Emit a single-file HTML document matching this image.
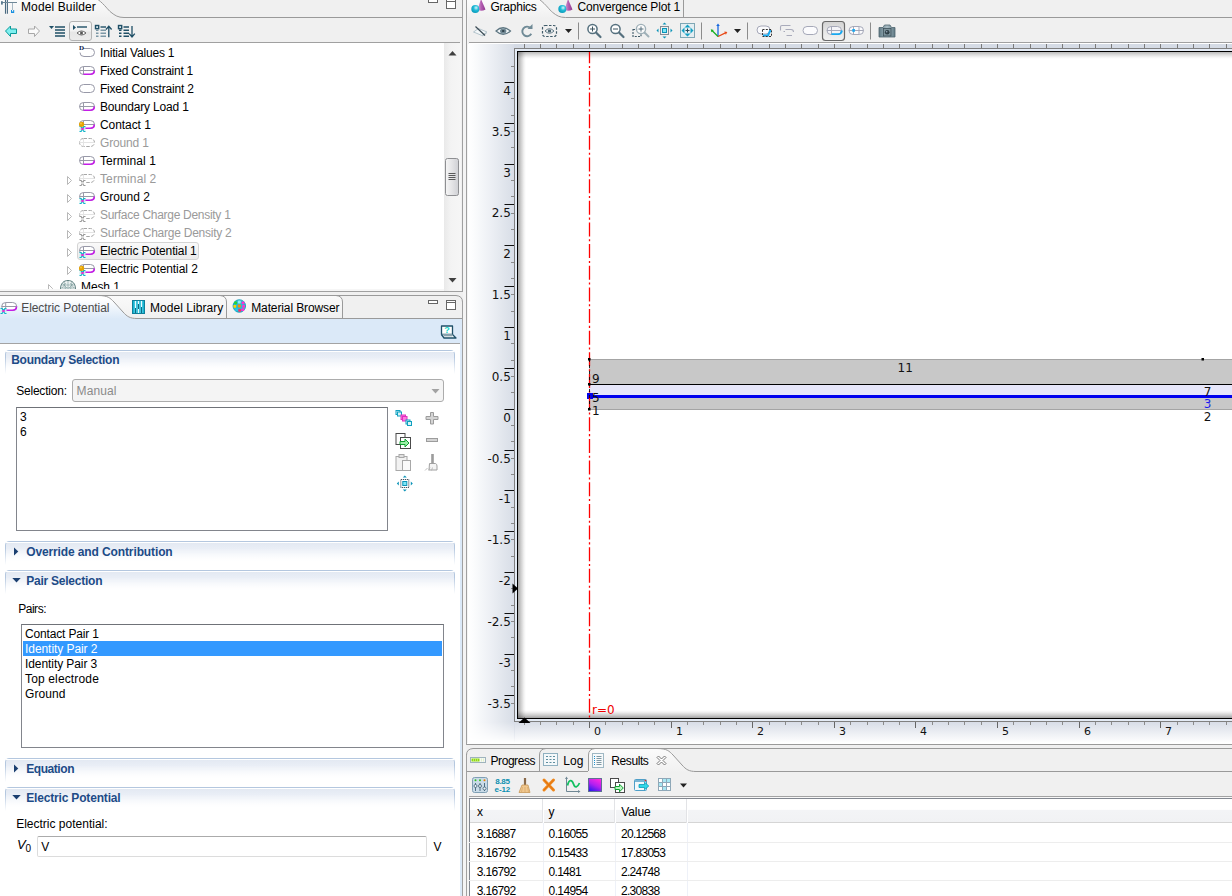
<!DOCTYPE html>
<html lang="en"><head><meta charset="utf-8"><title>Model Builder</title>
<style>
html,body{margin:0;padding:0;background:#f0f0f0;}
#root{position:relative;width:1232px;height:896px;overflow:hidden;background:#f0f0f0;font-family:"Liberation Sans",sans-serif;font-size:12px;color:#000;}
#root div,#root svg{position:absolute;box-sizing:border-box;}
#root svg{overflow:visible;}
.t{position:absolute;white-space:pre;line-height:1;height:1em;display:block;}

</style></head>
<body>
<div id="root">
<svg style="left:0px;top:0px;" width="463" height="18" viewBox="0 0 463 18" ><defs><linearGradient id="tg" x1="0" y1="0" x2="0" y2="1"><stop offset="0" stop-color="#fbfbfb"/><stop offset="1" stop-color="#f1f1f1"/></linearGradient></defs><path d="M0,0 L98,0 C105,5 108,10 111,12.3 C115,15.5 118,17.5 124,17.5 L0,17.5 Z" fill="url(#tg)"/><path d="M98,-0.5 C105,5 108,10 111,12.3 C115,15.5 118,17.5 124,17.5 L462,17.5" fill="none" stroke="#9a9a9a" stroke-width="1"/></svg>
<svg style="left:0px;top:0px;" width="18" height="15" viewBox="0 0 18 15" ><path d="M5.500,0 V13.700 M7.400,0 V13.700" stroke="#4a6a80" stroke-width="1.100"/><path d="M1,2.500 H17" stroke="#6f8898" stroke-width="1"/><rect x="1" y="1.200" width="1.800" height="3.400" fill="#5a7a90"/><path d="M12.500,3 V10" stroke="#a8b8c4" stroke-width="1"/><path d="M11,10 h1 v1.500 h1.200 v-1.500 h1 v3 h-3.200 z" fill="#1890e0"/></svg>
<svg style="left:428px;top:-1px;" width="30" height="12" viewBox="0 0 30 12" ><rect x="0.5" y="0.5" width="9" height="3" fill="#fff" stroke="#666"/><rect x="18.5" y="0.5" width="9" height="9" fill="#fff" stroke="#666"/><line x1="18" y1="2.5" x2="28" y2="2.5" stroke="#666"/></svg>
<div style="left:0px;top:42px;width:460px;height:1px;background:#a0a0a0;"></div>
<div style="left:0px;top:43px;width:444px;height:246px;background:#fff;"></div>
<div style="left:0px;top:289px;width:461px;height:2px;background:#f6f6f6;"></div>
<div style="left:444px;top:43px;width:17px;height:248px;background:linear-gradient(90deg,#e9e9e9 0,#f3f3f3 40%,#f6f6f6 100%);"></div>
<svg style="left:444px;top:43px;" width="17" height="248" viewBox="0 0 17 248" ><path d="M4.5,12.5 L8.5,8 L12.5,12.5 Z" fill="#404040"/><path d="M4.5,235 L12.5,235 L8.5,239.5 Z" fill="#404040"/><defs><linearGradient id="th" x1="0" y1="0" x2="1" y2="0"><stop offset="0" stop-color="#f6f6f6"/><stop offset="0.5" stop-color="#e4e4e6"/><stop offset="1" stop-color="#cfd0d4"/></linearGradient></defs><rect x="1.5" y="115.5" width="13" height="37" rx="2" fill="url(#th)" stroke="#8e8f92"/><path d="M4.5,130.5 h7 M4.5,132.5 h7 M4.5,134.5 h7 M4.5,136.5 h7" stroke="#5a5a5a" stroke-width="1"/></svg>
<div style="left:0px;top:291px;width:463px;height:1px;background:#a0a0a0;"></div>
<div style="left:462px;top:0px;width:1px;height:292px;background:#a0a0a0;"></div>
<div style="left:462px;top:302px;width:1px;height:594px;background:#a0a0a0;"></div>
<div style="left:466px;top:0px;width:1px;height:745px;background:#a0a0a0;"></div>
<div style="left:466px;top:754px;width:1px;height:142px;background:#a0a0a0;"></div>
<div style="left:463px;top:0px;width:3px;height:896px;background:#f4f4f4;"></div>
<svg style="left:0px;top:18px;" width="140" height="24" viewBox="0 0 140 24" ><path d="M5.5,13 L10.5,8 L10.5,11 L16.5,11 L16.5,15.5 L10.5,15.5 L10.5,18.5 Z" fill="#7ff0f0" stroke="#0a9a9a" stroke-width="1" stroke-linejoin="round"/><path d="M39.5,13 L34.5,8 L34.5,11 L28.5,11 L28.5,15.5 L34.5,15.5 L34.5,18.5 Z" fill="#fafafa" stroke="#a8a8a8" stroke-width="1" stroke-linejoin="round"/><path d="M49,8 L54,8 L51.5,11 Z" fill="#1f4f66"/><path d="M55,9 h10 M55,12 h10 M55,15 h10 M55,18 h10" stroke="#1f4f66" stroke-width="1.3"/><defs><linearGradient id="pb" x1="0" y1="0" x2="0" y2="1"><stop offset="0" stop-color="#f7f7f7"/><stop offset="0.5" stop-color="#f2f2f2"/><stop offset="0.55" stop-color="#e6e6e6"/><stop offset="1" stop-color="#ececec"/></linearGradient></defs><rect x="69.5" y="3.5" width="22" height="19" rx="2.5" fill="url(#pb)" stroke="#b4b4b4"/><path d="M73,7 L73,12 L76,9.5 Z" fill="#1f4f66"/><path d="M77,9 h10" stroke="#1f4f66" stroke-width="1.4"/><path d="M77,15 Q81.5,11 86,15 Q81.5,19 77,15 Z" fill="#fff" stroke="#555" stroke-width="0.9"/><circle cx="81.5" cy="15" r="1.5" fill="#555"/><rect x="95.500" y="7.500" width="3.200" height="3.200" fill="#d6e4ea" stroke="#1f4f66" stroke-width="1.400"/><path d="M100.500,9 h5.500" stroke="#1f4f66" stroke-width="1.400"/><path d="M96,12.300 h2.500 M96,15.300 h2.500 M96,18.300 h2.500 M100.500,12.300 h5.500 M100.500,15.300 h5.500 M100.500,18.300 h5.500" stroke="#7d98a6" stroke-width="1.400"/><path d="M108.800,19.300 V8.500 M106,11.500 L108.800,8.200 L111.600,11.500" stroke="#1f4f66" stroke-width="1.300" fill="none"/><rect x="118.500" y="7.500" width="3.200" height="3.200" fill="#d6e4ea" stroke="#1f4f66" stroke-width="1.400"/><path d="M123.500,9 h5.500 M119,12.300 h2.500 M119,15.300 h2.500 M119,18.300 h2.500 M123.500,12.300 h5.500 M123.500,15.300 h5.500 M123.500,18.300 h5.500" stroke="#1f4f66" stroke-width="1.400"/><path d="M132,8 V18.800 M129.200,15.700 L132,19 L134.800,15.700" stroke="#1f4f66" stroke-width="1.300" fill="none"/></svg>
<div style="left:77px;top:242px;width:122px;height:18px;border:1px solid #d4d4d4;border-radius:3px;background:linear-gradient(#fafafa,#ebebeb);"></div>
<svg style="left:79px;top:43px;" width="16" height="18" viewBox="0 0 16 18" ><path d="M4,5.500 H11.5 a4,4 0 0 1 0,8 H5 a4,4 0 0 1 -4,-4" fill="none" stroke="#9899a8"/></svg>
<svg style="left:79px;top:61px;" width="16" height="18" viewBox="0 0 16 18" ><rect x="0.5" y="5.5" width="15" height="8" rx="4" ry="4" fill="#fff" stroke="#9899a8"/><path d="M4.5,5.5 v8 M0.5,9.5 h15" stroke="#9899a8" stroke-width="1" fill="none"/><path d="M4.5,13.3 H11 C13.5,13.3 15.3,12 15.3,9.5" stroke="#c51ce8" stroke-width="1.6" fill="none"/></svg>
<svg style="left:79px;top:79px;" width="16" height="18" viewBox="0 0 16 18" ><rect x="0.5" y="5.5" width="15" height="8" rx="4" ry="4" fill="#fff" stroke="#9899a8"/></svg>
<svg style="left:79px;top:97px;" width="16" height="18" viewBox="0 0 16 18" ><rect x="0.5" y="5.5" width="15" height="8" rx="4" ry="4" fill="#fff" stroke="#9899a8"/><path d="M4.5,5.5 v8 M0.5,9.5 h15" stroke="#9899a8" stroke-width="1" fill="none"/><path d="M4.5,13.3 H11 C13.5,13.3 15.3,12 15.3,9.5" stroke="#c51ce8" stroke-width="1.6" fill="none"/></svg>
<svg style="left:79px;top:115px;" width="16" height="18" viewBox="0 0 16 18" ><rect x="0.5" y="5.5" width="15" height="8" rx="4" ry="4" fill="#fff" stroke="#9899a8"/><path d="M4.5,5.5 v8 M0.5,9.5 h15" stroke="#9899a8" stroke-width="1" fill="none"/><path d="M4.5,13.3 H11 C13.5,13.3 15.3,12 15.3,9.5" stroke="#c51ce8" stroke-width="1.6" fill="none"/><path d="M0.5,11.5 H2 Q4.300,14 2,16.5 H0.5 M6.5,11.5 H5 Q2.700,14 5,16.5 H6.5" fill="none" stroke="#12b5c9" stroke-width="1.200"/><path d="M0.5,12.2 H1.800 Q3.300,14 1.800,15.8 H0.5 Z M6.5,12.2 H5.200 Q3.700,14 5.200,15.8 H6.5 Z" fill="#c8eef2"/><rect x="2.300" y="13.1" width="2.400" height="1.800" fill="#ff1fd0"/><circle cx="2.6" cy="9.300" r="2.6" fill="#e8a400"/><circle cx="2" cy="8.600" r="1" fill="#f6c540"/></svg>
<svg style="left:79px;top:133px;" width="16" height="18" viewBox="0 0 16 18" ><rect x="0.5" y="5.5" width="15" height="8" rx="4" ry="4" fill="#fff" stroke="#a6a6a6" stroke-dasharray="3.5,1.5"/><path d="M4.5,5.5 v8 M0.5,9.5 h15" stroke="#e4e4e4" stroke-width="1" fill="none"/></svg>
<svg style="left:79px;top:151px;" width="16" height="18" viewBox="0 0 16 18" ><rect x="0.5" y="5.5" width="15" height="8" rx="4" ry="4" fill="#fff" stroke="#9899a8"/><path d="M4.5,5.5 v8 M0.5,9.5 h15" stroke="#9899a8" stroke-width="1" fill="none"/><path d="M4.5,13.3 H11 C13.5,13.3 15.3,12 15.3,9.5" stroke="#c51ce8" stroke-width="1.6" fill="none"/></svg>
<svg style="left:79px;top:169px;" width="16" height="18" viewBox="0 0 16 18" ><rect x="0.5" y="5.5" width="15" height="8" rx="4" ry="4" fill="#fff" stroke="#a6a6a6" stroke-dasharray="3.5,1.5"/><path d="M4.5,5.5 v8 M0.5,9.5 h15" stroke="#e4e4e4" stroke-width="1" fill="none"/><path d="M0.5,11.5 H2 Q4.300,14 2,16.5 H0.5 M6.5,11.5 H5 Q2.700,14 5,16.5 H6.5" fill="none" stroke="#999999" stroke-width="1.200"/><path d="M0.5,12.2 H1.800 Q3.300,14 1.800,15.8 H0.5 Z M6.5,12.2 H5.200 Q3.700,14 5.200,15.8 H6.5 Z" fill="#fff"/><rect x="2.300" y="13.1" width="2.400" height="1.800" fill="#e0e0e0"/></svg>
<svg style="left:67px;top:176px;" width="6" height="9" viewBox="0 0 6 9" ><path d="M0.5,0.5 L4.5,4.5 L0.5,8.5 Z" fill="#fff" stroke="#b8b8b8" stroke-width="1" stroke-linejoin="round"/></svg>
<svg style="left:79px;top:187px;" width="16" height="18" viewBox="0 0 16 18" ><rect x="0.5" y="5.5" width="15" height="8" rx="4" ry="4" fill="#fff" stroke="#9899a8"/><path d="M4.5,5.5 v8 M0.5,9.5 h15" stroke="#9899a8" stroke-width="1" fill="none"/><path d="M4.5,13.3 H11 C13.5,13.3 15.3,12 15.3,9.5" stroke="#c51ce8" stroke-width="1.6" fill="none"/><path d="M0.5,11.5 H2 Q4.300,14 2,16.5 H0.5 M6.5,11.5 H5 Q2.700,14 5,16.5 H6.5" fill="none" stroke="#12b5c9" stroke-width="1.200"/><path d="M0.5,12.2 H1.800 Q3.300,14 1.800,15.8 H0.5 Z M6.5,12.2 H5.200 Q3.700,14 5.200,15.8 H6.5 Z" fill="#c8eef2"/><rect x="2.300" y="13.1" width="2.400" height="1.800" fill="#ff1fd0"/></svg>
<svg style="left:67px;top:194px;" width="6" height="9" viewBox="0 0 6 9" ><path d="M0.5,0.5 L4.5,4.5 L0.5,8.5 Z" fill="#fff" stroke="#b8b8b8" stroke-width="1" stroke-linejoin="round"/></svg>
<svg style="left:79px;top:205px;" width="16" height="18" viewBox="0 0 16 18" ><rect x="0.5" y="5.5" width="15" height="8" rx="4" ry="4" fill="#fff" stroke="#a6a6a6" stroke-dasharray="3.5,1.5"/><path d="M4.5,5.5 v8 M0.5,9.5 h15" stroke="#e4e4e4" stroke-width="1" fill="none"/><path d="M0.5,11.5 H2 Q4.300,14 2,16.5 H0.5 M6.5,11.5 H5 Q2.700,14 5,16.5 H6.5" fill="none" stroke="#999999" stroke-width="1.200"/><path d="M0.5,12.2 H1.800 Q3.300,14 1.800,15.8 H0.5 Z M6.5,12.2 H5.200 Q3.700,14 5.200,15.8 H6.5 Z" fill="#fff"/><rect x="2.300" y="13.1" width="2.400" height="1.800" fill="#e0e0e0"/></svg>
<svg style="left:67px;top:212px;" width="6" height="9" viewBox="0 0 6 9" ><path d="M0.5,0.5 L4.5,4.5 L0.5,8.5 Z" fill="#fff" stroke="#b8b8b8" stroke-width="1" stroke-linejoin="round"/></svg>
<svg style="left:79px;top:223px;" width="16" height="18" viewBox="0 0 16 18" ><rect x="0.5" y="5.5" width="15" height="8" rx="4" ry="4" fill="#fff" stroke="#a6a6a6" stroke-dasharray="3.5,1.5"/><path d="M4.5,5.5 v8 M0.5,9.5 h15" stroke="#e4e4e4" stroke-width="1" fill="none"/><path d="M0.5,11.5 H2 Q4.300,14 2,16.5 H0.5 M6.5,11.5 H5 Q2.700,14 5,16.5 H6.5" fill="none" stroke="#999999" stroke-width="1.200"/><path d="M0.5,12.2 H1.800 Q3.300,14 1.800,15.8 H0.5 Z M6.5,12.2 H5.200 Q3.700,14 5.200,15.8 H6.5 Z" fill="#fff"/><rect x="2.300" y="13.1" width="2.400" height="1.800" fill="#e0e0e0"/></svg>
<svg style="left:67px;top:230px;" width="6" height="9" viewBox="0 0 6 9" ><path d="M0.5,0.5 L4.5,4.5 L0.5,8.5 Z" fill="#fff" stroke="#b8b8b8" stroke-width="1" stroke-linejoin="round"/></svg>
<svg style="left:79px;top:241px;" width="16" height="18" viewBox="0 0 16 18" ><rect x="0.5" y="5.5" width="15" height="8" rx="4" ry="4" fill="#fff" stroke="#9899a8"/><path d="M4.5,5.5 v8 M0.5,9.5 h15" stroke="#9899a8" stroke-width="1" fill="none"/><path d="M4.5,13.3 H11 C13.5,13.3 15.3,12 15.3,9.5" stroke="#c51ce8" stroke-width="1.6" fill="none"/><path d="M0.5,11.5 H2 Q4.300,14 2,16.5 H0.5 M6.5,11.5 H5 Q2.700,14 5,16.5 H6.5" fill="none" stroke="#12b5c9" stroke-width="1.200"/><path d="M0.5,12.2 H1.800 Q3.300,14 1.800,15.8 H0.5 Z M6.5,12.2 H5.200 Q3.700,14 5.200,15.8 H6.5 Z" fill="#c8eef2"/><rect x="2.300" y="13.1" width="2.400" height="1.800" fill="#ff1fd0"/></svg>
<svg style="left:67px;top:248px;" width="6" height="9" viewBox="0 0 6 9" ><path d="M0.5,0.5 L4.5,4.5 L0.5,8.5 Z" fill="#fff" stroke="#b8b8b8" stroke-width="1" stroke-linejoin="round"/></svg>
<svg style="left:79px;top:259px;" width="16" height="18" viewBox="0 0 16 18" ><rect x="0.5" y="5.5" width="15" height="8" rx="4" ry="4" fill="#fff" stroke="#9899a8"/><path d="M4.5,5.5 v8 M0.5,9.5 h15" stroke="#9899a8" stroke-width="1" fill="none"/><path d="M4.5,13.3 H11 C13.5,13.3 15.3,12 15.3,9.5" stroke="#c51ce8" stroke-width="1.6" fill="none"/><path d="M0.5,11.5 H2 Q4.300,14 2,16.5 H0.5 M6.5,11.5 H5 Q2.700,14 5,16.5 H6.5" fill="none" stroke="#12b5c9" stroke-width="1.200"/><path d="M0.5,12.2 H1.800 Q3.300,14 1.800,15.8 H0.5 Z M6.5,12.2 H5.200 Q3.700,14 5.200,15.8 H6.5 Z" fill="#c8eef2"/><rect x="2.300" y="13.1" width="2.400" height="1.800" fill="#ff1fd0"/><circle cx="2.6" cy="9.300" r="2.6" fill="#e8a400"/><circle cx="2" cy="8.600" r="1" fill="#f6c540"/></svg>
<svg style="left:67px;top:266px;" width="6" height="9" viewBox="0 0 6 9" ><path d="M0.5,0.5 L4.5,4.5 L0.5,8.5 Z" fill="#fff" stroke="#b8b8b8" stroke-width="1" stroke-linejoin="round"/></svg>
<div style="left:0px;top:277px;width:444px;height:12px;overflow:hidden;"><svg style="left:48px;top:7px;" width="6" height="9" viewBox="0 0 6 9" ><path d="M0.5,0.5 L4.5,4.5 L0.5,8.5 Z" fill="#fff" stroke="#b8b8b8" stroke-width="1"/></svg><svg style="left:60px;top:3px;" width="16" height="14" viewBox="0 0 16 14" ><path d="M0.500,9 C0.500,3 4,0.500 8,0.500 C12,0.500 15.500,3 15.500,9 V12 H0.500 Z" fill="#eef3f3" stroke="#5f7f80"/><path d="M1,5 H15 M1,8 H15 M4,1.500 L6,12 M12,1.500 L10,12 M8,1 V12 M2,3 L7,8 M14,3 L9,8 M2,8 L6,3 M14,8 L10,3" stroke="#7a9a9a" stroke-width="0.600" fill="none"/></svg><span class="t" style="left:81px;top:3.84px;font-size:12px;letter-spacing:-0.1px;">Mesh 1</span></div>
<svg style="left:0px;top:292px;" width="463" height="28" viewBox="0 0 463 28" ><defs><linearGradient id="tg2" x1="0" y1="0" x2="0" y2="1"><stop offset="0" stop-color="#ffffff"/><stop offset="0.150" stop-color="#ffffff"/><stop offset="1" stop-color="#dbe9f8"/></linearGradient><linearGradient id="tg3" x1="0" y1="0" x2="0" y2="1"><stop offset="0" stop-color="#fafafa"/><stop offset="1" stop-color="#f0f0f0"/></linearGradient></defs><path d="M100,3.5 L336,3.500 Q342.5,4 342.5,10 L342.500,26.5 L100,26.5 Z" fill="url(#tg3)"/><path d="M0,3.500 L98,3.500 C108,3.5 110,6 114,10 L123,20 C127,24.500 130,26.5 137,26.5 L137,27 L0,27 Z" fill="url(#tg2)"/><path d="M0,3.500 L98,3.500 C108,3.5 110,6 114,10 L123,20 C127,24.500 130,26.5 137,26.5 L462,26.5" fill="none" stroke="#9a9a9a"/><path d="M98,3.500 L456,3.500 Q462.500,4 462.500,10" fill="none" stroke="#9a9a9a"/><path d="M220,3.500 Q226.500,4 226.500,10 V26" fill="none" stroke="#9a9a9a"/><path d="M336,3.500 Q342.500,4 342.500,10 V26" fill="none" stroke="#9a9a9a"/></svg>
<svg style="left:428px;top:300px;" width="30" height="12" viewBox="0 0 30 12" ><rect x="0.5" y="0.5" width="9" height="3" fill="#fff" stroke="#666"/><rect x="18.5" y="0.5" width="9" height="9" fill="#fff" stroke="#666"/><line x1="18" y1="2.5" x2="28" y2="2.5" stroke="#666"/></svg>
<svg style="left:0px;top:300px;" width="20" height="18" viewBox="0 0 20 18" ><g transform="translate(1.200,0)"><rect x="0.5" y="2.5" width="15" height="8" rx="4" ry="4" fill="#fff" stroke="#9899a8"/><path d="M4.5,2.5 v8 M0.5,6.5 h15" stroke="#9899a8" stroke-width="1" fill="none"/><path d="M4.5,10.3 H11 C13.5,10.3 15.3,9 15.3,6.5" stroke="#c51ce8" stroke-width="1.6" fill="none"/></g><path d="M0.5,8.5 H2 Q4.300,11 2,13.5 H0.5 M6.5,8.5 H5 Q2.700,11 5,13.5 H6.5" fill="none" stroke="#12b5c9" stroke-width="1.200"/><path d="M0.5,9.2 H1.800 Q3.300,11 1.800,12.8 H0.5 Z M6.5,9.2 H5.200 Q3.700,11 5.200,12.8 H6.5 Z" fill="#c8eef2"/><rect x="2.300" y="10.1" width="2.400" height="1.800" fill="#ff1fd0"/></svg>
<svg style="left:132px;top:300px;" width="13" height="14" viewBox="0 0 13 14" ><rect x="0.5" y="0.5" width="12" height="13" fill="#18b7d4" stroke="#0f7f9a"/><path d="M3.5,1 V13 M6.5,1 V13 M9.500,1 V13" stroke="#e8fbff" stroke-width="1.4"/><path d="M3.5,8 V13 M6.5,4 V9 M9.500,7 V13" stroke="#0c6b85" stroke-width="1"/></svg>
<svg style="left:232px;top:299px;" width="15" height="15" viewBox="0 0 15 15" ><circle cx="7.300" cy="7" r="6.300" fill="#2bb9d2"/><circle cx="7.300" cy="7" r="6.300" fill="none" stroke="#0f9ab8" stroke-width="0.800"/><rect x="2.2" y="2.4" width="2.800" height="2.800" rx="0.600" fill="#22d832"/><rect x="5.9" y="1.6" width="2.800" height="2.800" rx="0.600" fill="#8ff0f4"/><rect x="9.6" y="2.4" width="2.800" height="2.800" rx="0.600" fill="#ff30d0"/><rect x="1.4" y="5.9" width="2.800" height="2.800" rx="0.600" fill="#ffd400"/><rect x="5.9" y="5.6" width="2.800" height="2.800" rx="0.600" fill="#ff9000"/><rect x="10.2" y="5.9" width="2.800" height="2.800" rx="0.600" fill="#ff30d0"/><rect x="3.2" y="9.3" width="2.800" height="2.800" rx="0.600" fill="#22c8e8"/><rect x="6.3" y="9.9" width="2.800" height="2.800" rx="0.600" fill="#ff3060"/><rect x="9.4" y="9.3" width="2.800" height="2.800" rx="0.600" fill="#ff30d0"/></svg>
<div style="left:0px;top:319px;width:462px;height:25px;background:#dbe9f8;"></div>
<div style="left:460px;top:344px;width:2px;height:552px;background:#dbe9f8;"></div>
<div style="left:0px;top:344px;width:460px;height:552px;background:#fff;"></div>
<div style="left:0px;top:343px;width:460px;height:1px;background:#a3a3a3;"></div>
<svg style="left:440px;top:324px;" width="17" height="16" viewBox="0 0 17 16" ><path d="M1.5,2 H12.500 V10.500 H1.500 Z" fill="#fff" stroke="#1f5068" stroke-width="1.3" stroke-linejoin="round"/><path d="M1.5,10.500 L4,14 H16 L12.500,10.500" fill="#eef3f5" stroke="#1f5068" stroke-width="1.3" stroke-linejoin="round"/><path d="M3.5,11.500 H12" stroke="#8aa3ad" stroke-width="1.5"/></svg>
<div style="left:5px;top:350px;width:450px;height:24px;border:1px solid #b4c7df;border-bottom:none;border-radius:4px 4px 0 0;background:linear-gradient(#e2e8f2 0,#eef2f8 45%,#ffffff 85%);-webkit-mask-image:linear-gradient(#000 30%,transparent 100%);mask-image:linear-gradient(#000 30%,transparent 100%);"></div>
<div style="left:6px;top:351px;width:448px;height:1px;background:#fff;"></div>
<div style="left:5px;top:541px;width:450px;height:24px;border:1px solid #b4c7df;border-bottom:none;border-radius:4px 4px 0 0;background:linear-gradient(#e2e8f2 0,#eef2f8 45%,#ffffff 85%);-webkit-mask-image:linear-gradient(#000 30%,transparent 100%);mask-image:linear-gradient(#000 30%,transparent 100%);"></div>
<div style="left:6px;top:542px;width:448px;height:1px;background:#fff;"></div>
<svg style="left:14px;top:547px;" width="5" height="9" viewBox="0 0 5 9" ><path d="M0,0.5 L4.300,4.5 L0,8.5 Z" fill="#1b3f70"/></svg>
<div style="left:5px;top:570px;width:450px;height:24px;border:1px solid #b4c7df;border-bottom:none;border-radius:4px 4px 0 0;background:linear-gradient(#e2e8f2 0,#eef2f8 45%,#ffffff 85%);-webkit-mask-image:linear-gradient(#000 30%,transparent 100%);mask-image:linear-gradient(#000 30%,transparent 100%);"></div>
<div style="left:6px;top:571px;width:448px;height:1px;background:#fff;"></div>
<svg style="left:12px;top:578px;" width="9" height="5" viewBox="0 0 9 5" ><path d="M0.3,0 L8.700,0 L4.500,4.500 Z" fill="#1b3f70"/></svg>
<div style="left:5px;top:758px;width:450px;height:24px;border:1px solid #b4c7df;border-bottom:none;border-radius:4px 4px 0 0;background:linear-gradient(#e2e8f2 0,#eef2f8 45%,#ffffff 85%);-webkit-mask-image:linear-gradient(#000 30%,transparent 100%);mask-image:linear-gradient(#000 30%,transparent 100%);"></div>
<div style="left:6px;top:759px;width:448px;height:1px;background:#fff;"></div>
<svg style="left:14px;top:764px;" width="5" height="9" viewBox="0 0 5 9" ><path d="M0,0.5 L4.300,4.5 L0,8.5 Z" fill="#1b3f70"/></svg>
<div style="left:5px;top:787px;width:450px;height:24px;border:1px solid #b4c7df;border-bottom:none;border-radius:4px 4px 0 0;background:linear-gradient(#e2e8f2 0,#eef2f8 45%,#ffffff 85%);-webkit-mask-image:linear-gradient(#000 30%,transparent 100%);mask-image:linear-gradient(#000 30%,transparent 100%);"></div>
<div style="left:6px;top:788px;width:448px;height:1px;background:#fff;"></div>
<svg style="left:12px;top:795px;" width="9" height="5" viewBox="0 0 9 5" ><path d="M0.3,0 L8.700,0 L4.500,4.500 Z" fill="#1b3f70"/></svg>
<div style="left:72px;top:379px;width:372px;height:23px;border:1px solid #acacac;border-radius:3px;background:#f4f4f4;"></div>
<svg style="left:431px;top:389px;" width="9" height="5" viewBox="0 0 9 5" ><path d="M0.5,0 L8.500,0 L4.500,4.500 Z" fill="#a2a2a2"/></svg>
<div style="left:16px;top:407px;width:372px;height:124px;border:1px solid #82858c;border-top-color:#6f7278;background:#fff;"></div>
<svg style="left:395px;top:409px;" width="48" height="84" viewBox="0 0 48 84" ><g fill="none" stroke-width="1"><rect x="1" y="1.500" width="4" height="4" fill="#d9f4f8" stroke="#0fa0c0"/><rect x="2.5" y="3" width="4" height="4" fill="#d9f4f8" stroke="#0fa0c0"/><rect x="6" y="6" width="4.500" height="4.500" fill="#ff7ae0" stroke="#e030c0"/><rect x="7.500" y="7.500" width="4.500" height="4.500" fill="#ff7ae0" stroke="#e030c0"/><rect x="11" y="11" width="4" height="4" fill="#d9f4f8" stroke="#0fa0c0"/><rect x="12.500" y="12.500" width="4" height="4" fill="#d9f4f8" stroke="#0fa0c0"/></g><path d="M35.5,3.500 h3 v4 h4.500 v3 h-4.500 v4.500 h-3 v-4.500 h-4.500 v-3 h4.500 z" fill="#d4d4d4" stroke="#9c9c9c"/><rect x="1" y="24.500" width="9" height="11" fill="#fff" stroke="#4a4a4a"/><rect x="5.500" y="28.500" width="10" height="11" fill="#fff" stroke="#4a4a4a"/><path d="M5,32.500 h5 v-2.500 l4,4 l-4,4 v-2.500 h-5 z" fill="#9df0a8" stroke="#10a030" stroke-width="1"/><rect x="31.500" y="29.500" width="11" height="3" fill="#d4d4d4" stroke="#9c9c9c"/><rect x="1" y="47.500" width="11" height="14" fill="#f2f2f2" stroke="#a8a8a8"/><rect x="4" y="45.500" width="5" height="3" fill="#e0e0e0" stroke="#a8a8a8"/><rect x="7.500" y="51.500" width="8" height="10" fill="#fafafa" stroke="#a8a8a8"/><path d="M37.500,45 v10" stroke="#9c9c9c" stroke-width="2.600"/><path d="M34.500,54.500 h6 q1.500,0.500 1.500,2.500 v4 h-2 l-6,0 z" fill="#f4f4f4" stroke="#a0a0a0"/><path d="M30,61.500 l2.500,-2.500 M33.500,61.500 l1.500,-3 M36.500,61.500 l1,-3" stroke="#b0b0b0" stroke-width="0.800"/><g transform="translate(1.300,0)"><rect x="4.500" y="70.500" width="8" height="8" fill="none" stroke="#1a2a3a" stroke-dasharray="1,1"/><rect x="6.500" y="72.500" width="4" height="4" fill="#7fe6f5" stroke="#0b93b8"/><path d="M8.500,66.500 l2,2 h-4 z M8.500,82.500 l2,-2 h-4 z M0.500,74.500 l2,-2 v4 z M16.500,74.500 l-2,-2 v4 z" fill="#0b93b8"/></g></svg>
<div style="left:21px;top:624px;width:423px;height:124px;border:1px solid #82858c;border-top-color:#6f7278;background:#fff;"></div>
<div style="left:23px;top:641px;width:419px;height:15px;background:#3399ff;"></div>
<div style="left:37px;top:836px;width:390px;height:21px;border:1px solid #dcdcdc;border-top-color:#ababab;border-radius:2px;background:#fff;"></div>
<div style="left:467px;top:0px;width:765px;height:18px;background:#f0f0f0;"></div>
<svg style="left:467px;top:0px;" width="765" height="18" viewBox="0 0 765 18" ><path d="M0,0 L72.500,0 C79.500,5 82.500,10 85.500,12.3 C89.500,15.5 92.500,17.5 98.500,17.5 L0,17.5 Z" fill="url(#tg)"/><path d="M72.500,-0.500 C79.500,5 82.500,10 85.500,12.3 C89.500,15.5 92.500,17.5 98.500,17.5 L765,17.5" fill="none" stroke="#9a9a9a"/><path d="M216.500,0 V17" stroke="#9a9a9a"/></svg>
<svg style="left:471px;top:0px;" width="16" height="14" viewBox="0 0 16 14" ><defs><radialGradient id="sph" cx="0.6" cy="0.35" r="0.7"><stop offset="0" stop-color="#d8f6fb"/><stop offset="0.45" stop-color="#22bcd8"/><stop offset="1" stop-color="#0797b8"/></radialGradient><linearGradient id="cone" x1="0" y1="0" x2="1" y2="0"><stop offset="0" stop-color="#d9a6d9"/><stop offset="0.5" stop-color="#b25cb0"/><stop offset="1" stop-color="#8e3a8e"/></linearGradient></defs><path d="M10,-1 L14.500,9.500 Q10,12 6.500,9.500 Z" fill="url(#cone)"/><circle cx="4.300" cy="9" r="4" fill="url(#sph)"/></svg>
<svg style="left:558px;top:0px;" width="16" height="14" viewBox="0 0 16 14" ><defs><radialGradient id="sph" cx="0.6" cy="0.35" r="0.7"><stop offset="0" stop-color="#d8f6fb"/><stop offset="0.45" stop-color="#22bcd8"/><stop offset="1" stop-color="#0797b8"/></radialGradient><linearGradient id="cone" x1="0" y1="0" x2="1" y2="0"><stop offset="0" stop-color="#d9a6d9"/><stop offset="0.5" stop-color="#b25cb0"/><stop offset="1" stop-color="#8e3a8e"/></linearGradient></defs><path d="M10,-1 L14.500,9.500 Q10,12 6.500,9.500 Z" fill="url(#cone)"/><circle cx="4.300" cy="9" r="4" fill="url(#sph)"/></svg>
<div style="left:469px;top:42px;width:763px;height:1px;background:#a0a0a0;"></div>
<div style="left:469px;top:43px;width:763px;height:1px;background:#ffffff;"></div>
<svg style="left:467px;top:18px;" width="440" height="24" viewBox="0 0 440 24" ><path d="M6.500,14 L11.500,10.500 L20,14 L15,17.500 Z" fill="#f4f8fa" stroke="#b4c4cc" stroke-width="1"/><path d="M15,17.500 L20,14 L19.500,15.500 L15.500,18.500 Z" fill="#b4c4cc"/><path d="M8.500,8.500 L18,17.500" stroke="#3b4b54" stroke-width="1.200"/><path d="M29,13 Q36,6.500 43.500,13 Q36,19.500 29,13 Z" fill="#f4f8fa" stroke="#5e7682" stroke-width="1.2"/><ellipse cx="36.2" cy="13" rx="3.200" ry="2.600" fill="#6f8793"/><ellipse cx="36.200" cy="13" rx="1.300" ry="1.100" fill="#2c3e48"/><path d="M63.500,10 A4.800,4.800 0 1 0 64.300,15.800" fill="none" stroke="#6f8a96" stroke-width="1.900"/><path d="M60.500,11 L65.500,11 L65.500,6 Z" fill="#6f8a96"/><rect x="75.500" y="7.500" width="14" height="11" rx="2.500" fill="none" stroke="#3f5a68" stroke-width="1.200" stroke-dasharray="2.500,1.500"/><path d="M78,13 Q82.500,8.500 87,13 Q82.500,17.500 78,13 Z" fill="#f4f8fa" stroke="#5e7682" stroke-width="1"/><ellipse cx="82.500" cy="13" rx="1.800" ry="1.600" fill="#4f6773"/><path d="M98,11 L105,11 L101.500,15 Z" fill="#222"/><path d="M111.500,4.500 V21.500" stroke="#8c8c8c" stroke-width="1"/><circle cx="125.500" cy="11" r="4.600" fill="#fdfdfd" stroke="#55707e" stroke-width="1.500"/><path d="M123,11 h5 M125.500,8.500 v5" stroke="#3b525e" stroke-width="1"/><path d="M129,14.500 L133.500,19" stroke="#55707e" stroke-width="2.200" stroke-linecap="round"/><circle cx="148.500" cy="11" r="4.600" fill="#fdfdfd" stroke="#55707e" stroke-width="1.500"/><path d="M146,11 h5" stroke="#3b525e" stroke-width="1"/><path d="M152,14.500 L156.500,19" stroke="#55707e" stroke-width="2.200" stroke-linecap="round"/><rect x="166" y="11.500" width="8" height="7" fill="none" stroke="#3f5a68" stroke-width="1.100" stroke-dasharray="2,1.200"/><circle cx="174" cy="11" r="4.600" fill="rgba(253,253,253,0.85)" stroke="#9fb0b8" stroke-width="1.400"/><path d="M171.500,11 h5 M174,8.500 v5" stroke="#5b7380" stroke-width="1"/><path d="M177.500,14.500 L181.500,18.500" stroke="#9fb0b8" stroke-width="2" stroke-linecap="round"/><g transform="translate(0,1)"><rect x="193.500" y="7.500" width="8" height="8" fill="none" stroke="#1a2a3a" stroke-dasharray="1,1"/><rect x="195.500" y="9.500" width="4" height="4" fill="#7fe6f5" stroke="#0b93b8"/><path d="M197.500,3.500 l2,2 h-4 z M197.500,19.500 l2,-2 h-4 z M189.500,11.500 l2,-2 v4 z M205.500,11.500 l-2,-2 v4 z" fill="#0b93b8"/></g><rect x="213.500" y="5.500" width="14" height="14" fill="#e3eef2" stroke="#7fa7b5"/><path d="M220.500,6.500 l3,3 h-6 z M220.500,18.500 l3,-3 h-6 z M214.500,12.500 l3,-3 v6 z M226.500,12.500 l-3,-3 v6 z" fill="#12a0c4"/><path d="M218.500,12.500 h4 M220.500,10.500 v4" stroke="#2a4a5a" stroke-width="1"/><path d="M234.500,4.500 V21.500" stroke="#8c8c8c" stroke-width="1"/><path d="M251,18.500 V7" stroke="#1668e0" stroke-width="1.300"/><path d="M251,5.500 l1.800,2.500 h-3.600 z" fill="#1668e0"/><path d="M251,18.500 L245,12.500" stroke="#18b020" stroke-width="1.300"/><path d="M243.800,11.300 l3,0.600 l-2.400,2.400 z" fill="#18b020"/><path d="M251,18.500 L258.500,14.800" stroke="#e84a18" stroke-width="1.300"/><path d="M260.300,13.900 l-1.400,2.800 l-1.600,-3.200 z" fill="#e84a18"/><path d="M267,11 L274,11 L270.500,15 Z" fill="#222"/><path d="M280.500,4.500 V21.500" stroke="#8c8c8c" stroke-width="1"/><rect x="290" y="8" width="13" height="8" rx="4" fill="#fbfbfd" stroke="#a5a8b8"/><path d="M296,17.500 H301 L303.500,12" stroke="#18a8f0" stroke-width="2" fill="none"/><rect x="295.500" y="11.500" width="9" height="7" fill="none" stroke="#333" stroke-dasharray="2,1.300"/><path d="M313.500,12.500 V9 Q313.500,7.500 315,7.500 H323.500 M318.500,11.500 H324 Q326.500,11.500 326.500,14 M316.500,13.500 h1.500 M319.500,17.500 H325" stroke="#a9abbb" stroke-width="1.100" fill="none"/><rect x="336" y="8.500" width="14.500" height="8" rx="4" fill="#fbfbfd" stroke="#a5a8b8"/><defs><linearGradient id="pb2" x1="0" y1="0" x2="0" y2="1"><stop offset="0" stop-color="#d2d2d2"/><stop offset="0.5" stop-color="#e6e6e6"/><stop offset="1" stop-color="#f2f2f2"/></linearGradient></defs><rect x="355.500" y="3.500" width="22" height="19" rx="3" fill="url(#pb2)" stroke="#6a6a6a" stroke-width="1.200"/><rect x="360" y="8.500" width="14.500" height="8" rx="4" fill="#f4f4f8" stroke="#a5a8b8"/><path d="M364.500,8.500 v8 M360,12.500 h14.500" stroke="#a5a8b8" stroke-width="1"/><path d="M364.500,16.200 H371.500 C373.500,16.200 374.500,14.500 375,12.500" stroke="#18a8f0" stroke-width="1.800" fill="none"/><rect x="382" y="8.500" width="14.500" height="8" rx="4" fill="#fbfbfd" stroke="#a5a8b8"/><path d="M386.500,8.500 v8 M392,8.500 v8 M382,12.500 h14.500" stroke="#a5a8b8" stroke-width="1"/><rect x="385.300" y="11" width="2.600" height="2.800" fill="#18a8f0"/><path d="M403.500,4.500 V21.500" stroke="#8c8c8c" stroke-width="1"/><defs><linearGradient id="cam" x1="0" y1="0" x2="1" y2="0"><stop offset="0" stop-color="#5f7984"/><stop offset="0.5" stop-color="#a9bcc4"/><stop offset="1" stop-color="#5f7984"/></linearGradient></defs><path d="M412,9.500 H416 L417.500,7 H423 L424.500,9.500 H428 V19 H412 Z" fill="url(#cam)" stroke="#4f6670" stroke-width="0.800"/><rect x="416.500" y="10.500" width="7.500" height="7.500" fill="#7e939c" stroke="#3d515a" stroke-width="0.800"/><circle cx="420.200" cy="14.200" r="2.300" fill="#2f3f47"/><circle cx="419.700" cy="13.700" r="0.800" fill="#9ab"/></svg>
<div style="left:467px;top:44px;width:765px;height:700px;background:#fff;"></div>
<div style="left:468px;top:44px;width:47px;height:678px;background:linear-gradient(90deg,#ffffff 0,#fbfcfd 12%,#eceff4 50%,#dde2ea 85%,#d8dde7 100%);"></div>
<div style="left:514px;top:44px;width:718px;height:5px;background:#d5dbe5;"></div>
<div style="left:514px;top:722px;width:718px;height:21px;background:linear-gradient(#d8dde7 0,#ffffff 100%);"></div>
<div style="left:468px;top:722px;width:47px;height:21px;background:linear-gradient(90deg,#ffffff 0,#fbfcfd 12%,#eceff4 50%,#dde2ea 85%,#d8dde7 100%);-webkit-mask-image:linear-gradient(#000,transparent);mask-image:linear-gradient(#000,transparent);"></div>
<div style="left:467px;top:18px;width:1px;height:726px;background:#f4f4f4;"></div>
<div style="left:514px;top:48px;width:760px;height:674px;border:1px solid #808080;background:#e4ebf5;"></div>
<div style="left:517px;top:51px;width:757px;height:668px;border:1px solid #000;background:#fff;"></div>
<div style="left:518px;top:52px;width:8px;height:666px;background:linear-gradient(90deg,rgba(0,0,0,0.34) 0,rgba(0,0,0,0.20) 35%,rgba(0,0,0,0.05) 75%,rgba(0,0,0,0) 100%);"></div>
<div style="left:518px;top:52px;width:714px;height:7px;background:linear-gradient(180deg,rgba(0,0,0,0.27) 0,rgba(0,0,0,0.15) 35%,rgba(0,0,0,0.04) 75%,rgba(0,0,0,0) 100%);"></div>
<div style="left:518px;top:710px;width:714px;height:8px;background:linear-gradient(0deg,rgba(0,0,0,0.36) 0,rgba(0,0,0,0.20) 35%,rgba(0,0,0,0.05) 75%,rgba(0,0,0,0) 100%);"></div>
<svg style="left:0px;top:0px;" width="1232" height="896" viewBox="0 0 1232 896" ><path d="M524.5,44 V48" stroke="#7a7a7a"/><path d="M540.5,44 V48" stroke="#7a7a7a"/><path d="M556.5,44 V48" stroke="#7a7a7a"/><path d="M573.5,44 V48" stroke="#7a7a7a"/><path d="M589.5,44 V48" stroke="#7a7a7a"/><path d="M605.5,44 V48" stroke="#7a7a7a"/><path d="M622.5,44 V48" stroke="#7a7a7a"/><path d="M638.5,44 V48" stroke="#7a7a7a"/><path d="M654.5,44 V48" stroke="#7a7a7a"/><path d="M671.5,44 V48" stroke="#7a7a7a"/><path d="M687.5,44 V48" stroke="#7a7a7a"/><path d="M703.5,44 V48" stroke="#7a7a7a"/><path d="M720.5,44 V48" stroke="#7a7a7a"/><path d="M736.5,44 V48" stroke="#7a7a7a"/><path d="M752.5,44 V48" stroke="#7a7a7a"/><path d="M769.5,44 V48" stroke="#7a7a7a"/><path d="M785.5,44 V48" stroke="#7a7a7a"/><path d="M801.5,44 V48" stroke="#7a7a7a"/><path d="M818.5,44 V48" stroke="#7a7a7a"/><path d="M834.5,44 V48" stroke="#7a7a7a"/><path d="M850.5,44 V48" stroke="#7a7a7a"/><path d="M867.5,44 V48" stroke="#7a7a7a"/><path d="M883.5,44 V48" stroke="#7a7a7a"/><path d="M899.5,44 V48" stroke="#7a7a7a"/><path d="M915.5,44 V48" stroke="#7a7a7a"/><path d="M932.5,44 V48" stroke="#7a7a7a"/><path d="M948.5,44 V48" stroke="#7a7a7a"/><path d="M964.5,44 V48" stroke="#7a7a7a"/><path d="M981.5,44 V48" stroke="#7a7a7a"/><path d="M997.5,44 V48" stroke="#7a7a7a"/><path d="M1013.5,44 V48" stroke="#7a7a7a"/><path d="M1030.5,44 V48" stroke="#7a7a7a"/><path d="M1046.5,44 V48" stroke="#7a7a7a"/><path d="M1062.5,44 V48" stroke="#7a7a7a"/><path d="M1079.5,44 V48" stroke="#7a7a7a"/><path d="M1095.5,44 V48" stroke="#7a7a7a"/><path d="M1111.5,44 V48" stroke="#7a7a7a"/><path d="M1128.5,44 V48" stroke="#7a7a7a"/><path d="M1144.5,44 V48" stroke="#7a7a7a"/><path d="M1160.5,44 V48" stroke="#7a7a7a"/><path d="M1177.5,44 V48" stroke="#7a7a7a"/><path d="M1193.5,44 V48" stroke="#7a7a7a"/><path d="M1209.5,44 V48" stroke="#7a7a7a"/><path d="M1226.5,44 V48" stroke="#7a7a7a"/><path d="M524.5,722 V725" stroke="#8a8a8a"/><path d="M540.5,722 V725" stroke="#8a8a8a"/><path d="M556.5,722 V725" stroke="#8a8a8a"/><path d="M573.5,722 V725" stroke="#8a8a8a"/><path d="M589.5,722 V728" stroke="#666"/><path d="M605.5,722 V725" stroke="#8a8a8a"/><path d="M622.5,722 V725" stroke="#8a8a8a"/><path d="M638.5,722 V725" stroke="#8a8a8a"/><path d="M654.5,722 V725" stroke="#8a8a8a"/><path d="M671.5,722 V728" stroke="#666"/><path d="M687.5,722 V725" stroke="#8a8a8a"/><path d="M703.5,722 V725" stroke="#8a8a8a"/><path d="M720.5,722 V725" stroke="#8a8a8a"/><path d="M736.5,722 V725" stroke="#8a8a8a"/><path d="M752.5,722 V728" stroke="#666"/><path d="M769.5,722 V725" stroke="#8a8a8a"/><path d="M785.5,722 V725" stroke="#8a8a8a"/><path d="M801.5,722 V725" stroke="#8a8a8a"/><path d="M818.5,722 V725" stroke="#8a8a8a"/><path d="M834.5,722 V728" stroke="#666"/><path d="M850.5,722 V725" stroke="#8a8a8a"/><path d="M867.5,722 V725" stroke="#8a8a8a"/><path d="M883.5,722 V725" stroke="#8a8a8a"/><path d="M899.5,722 V725" stroke="#8a8a8a"/><path d="M915.5,722 V728" stroke="#666"/><path d="M932.5,722 V725" stroke="#8a8a8a"/><path d="M948.5,722 V725" stroke="#8a8a8a"/><path d="M964.5,722 V725" stroke="#8a8a8a"/><path d="M981.5,722 V725" stroke="#8a8a8a"/><path d="M997.5,722 V728" stroke="#666"/><path d="M1013.5,722 V725" stroke="#8a8a8a"/><path d="M1030.5,722 V725" stroke="#8a8a8a"/><path d="M1046.5,722 V725" stroke="#8a8a8a"/><path d="M1062.5,722 V725" stroke="#8a8a8a"/><path d="M1079.5,722 V728" stroke="#666"/><path d="M1095.5,722 V725" stroke="#8a8a8a"/><path d="M1111.5,722 V725" stroke="#8a8a8a"/><path d="M1128.5,722 V725" stroke="#8a8a8a"/><path d="M1144.5,722 V725" stroke="#8a8a8a"/><path d="M1160.5,722 V728" stroke="#666"/><path d="M1177.5,722 V725" stroke="#8a8a8a"/><path d="M1193.5,722 V725" stroke="#8a8a8a"/><path d="M1209.5,722 V725" stroke="#8a8a8a"/><path d="M1226.5,722 V725" stroke="#8a8a8a"/><path d="M511,703.5 H514" stroke="#8a8a8a"/><path d="M511,686.5 H514" stroke="#8a8a8a"/><path d="M511,670.5 H514" stroke="#8a8a8a"/><path d="M511,637.5 H514" stroke="#8a8a8a"/><path d="M511,621.5 H514" stroke="#8a8a8a"/><path d="M511,605.5 H514" stroke="#8a8a8a"/><path d="M511,588.5 H514" stroke="#8a8a8a"/><path d="M511,556.5 H514" stroke="#8a8a8a"/><path d="M511,539.5 H514" stroke="#8a8a8a"/><path d="M511,523.5 H514" stroke="#8a8a8a"/><path d="M511,507.5 H514" stroke="#8a8a8a"/><path d="M511,474.5 H514" stroke="#8a8a8a"/><path d="M511,458.5 H514" stroke="#8a8a8a"/><path d="M511,441.5 H514" stroke="#8a8a8a"/><path d="M511,425.5 H514" stroke="#8a8a8a"/><path d="M511,392.5 H514" stroke="#8a8a8a"/><path d="M511,376.5 H514" stroke="#8a8a8a"/><path d="M511,360.5 H514" stroke="#8a8a8a"/><path d="M511,343.5 H514" stroke="#8a8a8a"/><path d="M511,311.5 H514" stroke="#8a8a8a"/><path d="M511,294.5 H514" stroke="#8a8a8a"/><path d="M511,278.5 H514" stroke="#8a8a8a"/><path d="M511,262.5 H514" stroke="#8a8a8a"/><path d="M511,229.5 H514" stroke="#8a8a8a"/><path d="M511,213.5 H514" stroke="#8a8a8a"/><path d="M511,196.5 H514" stroke="#8a8a8a"/><path d="M511,180.5 H514" stroke="#8a8a8a"/><path d="M511,147.5 H514" stroke="#8a8a8a"/><path d="M511,131.5 H514" stroke="#8a8a8a"/><path d="M511,115.5 H514" stroke="#8a8a8a"/><path d="M511,98.5 H514" stroke="#8a8a8a"/><path d="M511,66.5 H514" stroke="#8a8a8a"/><path d="M504.500,695.5 H514" stroke="#111" stroke-width="1"/><path d="M504.500,654.5 H514" stroke="#111" stroke-width="1"/><path d="M504.500,613.5 H514" stroke="#111" stroke-width="1"/><path d="M504.500,572.5 H514" stroke="#111" stroke-width="1"/><path d="M504.500,531.5 H514" stroke="#111" stroke-width="1"/><path d="M504.500,490.5 H514" stroke="#111" stroke-width="1"/><path d="M504.500,450.5 H514" stroke="#111" stroke-width="1"/><path d="M504.500,409.5 H514" stroke="#111" stroke-width="1"/><path d="M504.500,368.5 H514" stroke="#111" stroke-width="1"/><path d="M504.500,327.5 H514" stroke="#111" stroke-width="1"/><path d="M504.500,286.5 H514" stroke="#111" stroke-width="1"/><path d="M504.500,245.5 H514" stroke="#111" stroke-width="1"/><path d="M504.500,204.5 H514" stroke="#111" stroke-width="1"/><path d="M504.500,164.5 H514" stroke="#111" stroke-width="1"/><path d="M504.500,123.5 H514" stroke="#111" stroke-width="1"/><path d="M504.500,82.5 H514" stroke="#111" stroke-width="1"/></svg>
<svg style="left:0px;top:0px;" width="1232" height="896" viewBox="0 0 1232 896" ><path d="M518.500,723 L524.500,717.500 L530.500,723 Z" fill="#000"/><path d="M512.500,583.500 L518,588.500 L512.500,593.500 Z" fill="#000"/></svg>
<div style="left:589px;top:359px;width:643px;height:51px;background:#c8c8c8;border-top:1px solid #a4a4a4;border-bottom:1px solid #a4a4a4;"></div>
<div style="left:589px;top:384px;width:643px;height:12px;background:#e6e6fa;"></div>
<div style="left:589px;top:383.5px;width:643px;height:1.3px;background:#000;"></div>
<div style="left:587px;top:395px;width:645px;height:3px;background:#0000ee;"></div>
<div style="left:587px;top:393px;width:6px;height:6px;background:#0000ee;"></div>
<svg style="left:0px;top:0px;" width="1232" height="896" viewBox="0 0 1232 896" ><path d="M589.500,52 V718" stroke="#ff0000" stroke-width="1.300" stroke-dasharray="14,2.800,2.050,2.800" stroke-dashoffset="2.750"/><path d="M589.500,359 V409" stroke="#000" stroke-width="1" stroke-dasharray="3,3" opacity="0.8"/><rect x="588" y="358" width="2.500" height="2.500" fill="#000"/><rect x="588" y="383" width="2.500" height="2.500" fill="#000"/><rect x="588" y="408" width="2.500" height="2.500" fill="#000"/><rect x="1201.500" y="358" width="2.500" height="2.500" fill="#000"/></svg>
<div style="left:467px;top:743px;width:765px;height:1px;background:#ffffff;"></div>
<div style="left:467px;top:744px;width:765px;height:1px;background:#9a9a9a;"></div>
<div style="left:467px;top:745px;width:765px;height:4px;background:#f0f0f0;"></div>
<svg style="left:467px;top:745px;" width="765" height="30" viewBox="0 0 765 30" ><path d="M121,26.500 V10 Q121.500,4 128,3.500 L190,3.500 C200,3.500 202,6 206,10 L215,20 C219,24.500 222,26.500 229,26.500 Z" fill="url(#tg)"/><path d="M-0.500,10 Q-0.500,4 6,3.500 L190,3.500" fill="none" stroke="#9a9a9a"/><path d="M190,3.500 C200,3.500 202,6 206,10 L215,20 C219,24.500 222,26.500 229,26.500 L765,26.500" fill="none" stroke="#9a9a9a"/><path d="M0,26.500 H121 M190,3.500 H765" fill="none" stroke="#9a9a9a"/><path d="M79,3.500 Q72.500,4 72.500,10 V26" fill="none" stroke="#9a9a9a"/><path d="M128,3.500 Q121.500,4 121.500,10 V26" fill="none" stroke="#9a9a9a"/></svg>
<svg style="left:470px;top:757px;" width="16" height="7" viewBox="0 0 16 7" ><rect x="0.500" y="0.500" width="15" height="5" fill="#f4f7f8" stroke="#9fb4bc"/><rect x="1.500" y="1.500" width="8" height="3" fill="#8fdc10"/><path d="M3.500,1.500 v3 M5.500,1.500 v3 M7.500,1.500 v3 M11.500,1.500 v3 M13.500,1.500 v3" stroke="#d9f0a0" stroke-width="0.600"/></svg>
<svg style="left:543px;top:753px;" width="16" height="14" viewBox="0 0 16 14" ><rect x="0.500" y="0.500" width="14" height="12" fill="#f4f8fa" stroke="#8fb0c0"/><path d="M3,3.500 h2 M6.500,3.500 h2 M10,3.500 h2 M3,6.500 h2 M6.500,6.500 h2 M10,6.500 h2 M3,9.500 h2 M6.500,9.500 h2 M10,9.500 h2" stroke="#5f8ea0" stroke-width="1"/></svg>
<svg style="left:592px;top:753px;" width="13" height="15" viewBox="0 0 13 15" ><rect x="0.500" y="0.500" width="11" height="14" fill="#f7fafb" stroke="#9fb8c4"/><path d="M4.500,3.500 h5 M4.500,5.500 h5 M4.500,7.500 h5 M4.500,9.500 h5 M4.500,11.500 h5" stroke="#7f98a4" stroke-width="1"/><path d="M2,3.500 h1 M2,5.500 h1 M2,7.500 h1 M2,9.500 h1 M2,11.500 h1" stroke="#1890d0" stroke-width="1"/></svg>
<svg style="left:656px;top:755px;" width="11" height="11" viewBox="0 0 11 11" ><path d="M1,2.500 L2.500,1 L5.500,4 L8.500,1 L10,2.500 L7,5.500 L10,8.500 L8.500,10 L5.500,7 L2.500,10 L1,8.500 L4,5.500 Z" fill="#fff" stroke="#6a6a6a" stroke-width="0.900"/></svg>
<div style="left:469px;top:796px;width:763px;height:1px;background:#a3a3a3;"></div>
<div style="left:469px;top:797px;width:763px;height:1px;background:#f8f8f8;"></div>
<svg style="left:467px;top:773px;" width="230" height="24" viewBox="0 0 230 24" ><rect x="5.500" y="4.500" width="15" height="15" rx="2" fill="#c9dbe8" stroke="#7f9fb4"/><circle cx="8.500" cy="7.300" r="1" fill="#30c020"/><circle cx="13" cy="7.300" r="1" fill="#30c020"/><circle cx="17.500" cy="7.300" r="1" fill="#f08000"/><path d="M8.500,10 v8 M13,10 v8 M17.500,10 v8" stroke="#4f6f84" stroke-width="1"/><circle cx="8.500" cy="13" r="1.500" fill="#eef4f8" stroke="#3f5f74" stroke-width="0.800"/><circle cx="13" cy="13" r="1.500" fill="#eef4f8" stroke="#3f5f74" stroke-width="0.800"/><circle cx="17.500" cy="15.500" r="1.500" fill="#eef4f8" stroke="#3f5f74" stroke-width="0.800"/><path d="M58,5 v7" stroke="#8a6a4a" stroke-width="2.200"/><path d="M55,12 h6 l2,7.500 h-11 z" fill="#f0c890" stroke="#c89858" stroke-width="0.800"/><path d="M55.500,14 l-1,5 M58,14 v5.500 M60.500,14 l1,5" stroke="#d8a868" stroke-width="0.700"/><path d="M77,7 L86.500,17 M86.500,7 L77,17" stroke="#f08a20" stroke-width="3" stroke-linecap="round"/><path d="M77,7 L86.500,17 M86.500,7 L77,17" stroke="#e0700c" stroke-width="1" stroke-linecap="round"/><path d="M99.500,5 V18.500 H112" fill="none" stroke="#6f8794" stroke-width="1"/><path d="M99.500,3.500 l1.500,2.500 h-3 z M113.500,18.500 l-2.500,1.500 v-3 z" fill="#6f8794"/><path d="M100.500,12.500 C102,6 105,6.500 106.500,11 C108,15.500 110.500,14.500 112.500,10" fill="none" stroke="#12c060" stroke-width="1.800"/><defs><linearGradient id="pur" x1="0.700" y1="0" x2="0.200" y2="1"><stop offset="0" stop-color="#ff28e0"/><stop offset="0.500" stop-color="#b020f0"/><stop offset="1" stop-color="#2818f0"/></linearGradient></defs><rect x="121.500" y="5.500" width="13" height="13" fill="url(#pur)" stroke="#5f6f94" stroke-width="1"/><rect x="143.500" y="5.500" width="8" height="9" fill="#fff" stroke="#4a4a4a"/><rect x="148.500" y="9.500" width="9" height="10" fill="#fff" stroke="#4a4a4a"/><path d="M148,13.500 h4.500 v-2.300 l3.800,3.800 l-3.800,3.800 v-2.300 h-4.500 z" fill="#b8f5c0" stroke="#10a030" stroke-width="1"/><rect x="167.500" y="6.500" width="12" height="11" rx="1" fill="#f2f8fb" stroke="#4f9fc8"/><path d="M168,8 h11" stroke="#4f9fc8" stroke-width="1.500"/><circle cx="178.500" cy="7.500" r="0.800" fill="#e03020"/><path d="M172,11.500 h5.500 v-2.300 l4.300,3.800 l-4.300,3.800 v-2.300 h-5.500 z" fill="#30d8e8" stroke="#0a9ab8" stroke-width="0.800"/><rect x="191.500" y="5.500" width="12" height="12" fill="#fff" stroke="#8fa8b8"/><path d="M191.500,9.500 h12 M191.500,13.500 h12 M195.500,5.500 v12 M199.500,5.500 v12" stroke="#8fa8b8" stroke-width="1"/><rect x="196" y="6" width="3" height="3" fill="#a8e8f4"/><rect x="200" y="6" width="3" height="3" fill="#a8e8f4"/><rect x="192" y="10" width="3" height="3" fill="#a8e8f4"/><rect x="196" y="14" width="3" height="3" fill="#a8e8f4"/><path d="M213,10.500 L220,10.500 L216.500,14.500 Z" fill="#222"/></svg>
<div style="left:467px;top:798px;width:2px;height:98px;background:#f4f4f4;"></div>
<div style="left:469px;top:798px;width:763px;height:98px;background:#fff;border-top:1px solid #828790;border-left:1px solid #828790;"></div>
<div style="left:470px;top:799px;width:762px;height:24px;background:linear-gradient(#ffffff 0,#ffffff 45%,#f3f4f6 50%,#f1f2f4 100%);border-bottom:1px solid #d5d5d5;"></div>
<div style="left:542px;top:799px;width:2px;height:24px;background:linear-gradient(90deg,#e2e3e6 0,#e2e3e6 50%,#fff 50%);"></div>
<div style="left:543px;top:823px;width:1px;height:73px;background:#eef1f8;"></div>
<div style="left:614px;top:799px;width:2px;height:24px;background:linear-gradient(90deg,#e2e3e6 0,#e2e3e6 50%,#fff 50%);"></div>
<div style="left:615px;top:823px;width:1px;height:73px;background:#eef1f8;"></div>
<div style="left:686px;top:799px;width:2px;height:24px;background:linear-gradient(90deg,#e2e3e6 0,#e2e3e6 50%,#fff 50%);"></div>
<div style="left:687px;top:823px;width:1px;height:73px;background:#eef1f8;"></div>
<div style="left:469px;top:842px;width:763px;height:1px;background:#ededed;"></div>
<div style="left:469px;top:861px;width:763px;height:1px;background:#ededed;"></div>
<div style="left:469px;top:880px;width:763px;height:1px;background:#ededed;"></div>
<span class="t" style="left:21px;top:0.84px;font-size:12px;letter-spacing:0.119px;">Model Builder</span>
<span class="t" style="left:79px;top:44.87px;font-size:7px;color:#0a1a4a;font-weight:bold;font-family:'Liberation Serif',serif;">D</span>
<span class="t" style="left:100px;top:46.84px;font-size:12px;letter-spacing:-0.174px;">Initial Values 1</span>
<span class="t" style="left:100px;top:64.84px;font-size:12px;letter-spacing:-0.240px;">Fixed Constraint 1</span>
<span class="t" style="left:100px;top:82.84px;font-size:12px;letter-spacing:-0.210px;">Fixed Constraint 2</span>
<span class="t" style="left:100px;top:100.84px;font-size:12px;letter-spacing:-0.186px;">Boundary Load 1</span>
<span class="t" style="left:100px;top:118.84px;font-size:12px;letter-spacing:-0.070px;">Contact 1</span>
<span class="t" style="left:100px;top:136.84px;font-size:12px;color:#9a9a9a;letter-spacing:-0.176px;">Ground 1</span>
<span class="t" style="left:100px;top:154.84px;font-size:12px;letter-spacing:0.050px;">Terminal 1</span>
<span class="t" style="left:100px;top:172.84px;font-size:12px;color:#9a9a9a;letter-spacing:0.105px;">Terminal 2</span>
<span class="t" style="left:100px;top:190.84px;font-size:12px;letter-spacing:-0.033px;">Ground 2</span>
<span class="t" style="left:100px;top:208.84px;font-size:12px;color:#9a9a9a;letter-spacing:-0.287px;">Surface Charge Density 1</span>
<span class="t" style="left:100px;top:226.84px;font-size:12px;color:#9a9a9a;letter-spacing:-0.244px;">Surface Charge Density 2</span>
<span class="t" style="left:100px;top:244.84px;font-size:12px;letter-spacing:-0.136px;">Electric Potential 1</span>
<span class="t" style="left:100px;top:262.84px;font-size:12px;letter-spacing:-0.083px;">Electric Potential 2</span>
<span class="t" style="left:21.2px;top:301.54px;font-size:12px;color:#4a4a4a;letter-spacing:-0.063px;">Electric Potential</span>
<span class="t" style="left:150px;top:301.54px;font-size:12px;letter-spacing:0.050px;">Model Library</span>
<span class="t" style="left:251.2px;top:301.54px;font-size:12px;letter-spacing:-0.115px;">Material Browser</span>
<span class="t" style="left:444.3px;top:325.78px;font-size:9px;color:#12d6c8;font-weight:bold;">?</span>
<span class="t" style="left:11.2px;top:354.44px;font-size:12px;color:#1d4b87;font-weight:bold;letter-spacing:-0.258px;">Boundary Selection</span>
<span class="t" style="left:26.2px;top:546.04px;font-size:12px;color:#1d4b87;font-weight:bold;letter-spacing:-0.118px;">Override and Contribution</span>
<span class="t" style="left:26.2px;top:575.04px;font-size:12px;color:#1d4b87;font-weight:bold;letter-spacing:-0.236px;">Pair Selection</span>
<span class="t" style="left:26.2px;top:763.04px;font-size:12px;color:#1d4b87;font-weight:bold;letter-spacing:-0.433px;">Equation</span>
<span class="t" style="left:26.2px;top:792.04px;font-size:12px;color:#1d4b87;font-weight:bold;letter-spacing:-0.169px;">Electric Potential</span>
<span class="t" style="left:16.2px;top:384.54px;font-size:12px;letter-spacing:-0.211px;">Selection:</span>
<span class="t" style="left:76.5px;top:384.54px;font-size:12px;color:#8a8a8a;letter-spacing:0.129px;">Manual</span>
<span class="t" style="left:20px;top:411.04px;font-size:12px;">3</span>
<span class="t" style="left:20px;top:426.04px;font-size:12px;">6</span>
<span class="t" style="left:18.2px;top:602.94px;font-size:12px;letter-spacing:-0.475px;">Pairs:</span>
<span class="t" style="left:25px;top:628.04px;font-size:12px;letter-spacing:-0.157px;">Contact Pair 1</span>
<span class="t" style="left:25px;top:643.04px;font-size:12px;color:#fff;letter-spacing:-0.062px;">Identity Pair 2</span>
<span class="t" style="left:25px;top:658.04px;font-size:12px;letter-spacing:-0.077px;">Identity Pair 3</span>
<span class="t" style="left:25px;top:673.04px;font-size:12px;letter-spacing:0.146px;">Top electrode</span>
<span class="t" style="left:25px;top:688.04px;font-size:12px;letter-spacing:0.055px;">Ground</span>
<span class="t" style="left:16.2px;top:818.14px;font-size:12px;">Electric potential:</span>
<span class="t" style="left:17px;top:837.69px;font-size:13px;font-style:italic;">V</span>
<span class="t" style="left:25.5px;top:843.73px;font-size:10px;">0</span>
<span class="t" style="left:41.2px;top:840.54px;font-size:12px;">V</span>
<span class="t" style="left:433.5px;top:840.54px;font-size:12px;">V</span>
<span class="t" style="left:490.5px;top:0.84px;font-size:12px;letter-spacing:-0.245px;">Graphics</span>
<span class="t" style="left:577.6px;top:0.84px;font-size:12px;letter-spacing:-0.165px;">Convergence Plot 1</span>
<span class="t" style="left:487.39px;top:698.14px;font-size:12px;color:#111;font-family:'DejaVu Sans','Liberation Sans',sans-serif;">-3.5</span>
<span class="t" style="left:498.84px;top:657.14px;font-size:12px;color:#111;font-family:'DejaVu Sans','Liberation Sans',sans-serif;">-3</span>
<span class="t" style="left:487.39px;top:616.14px;font-size:12px;color:#111;font-family:'DejaVu Sans','Liberation Sans',sans-serif;">-2.5</span>
<span class="t" style="left:498.84px;top:575.14px;font-size:12px;color:#111;font-family:'DejaVu Sans','Liberation Sans',sans-serif;">-2</span>
<span class="t" style="left:487.39px;top:534.14px;font-size:12px;color:#111;font-family:'DejaVu Sans','Liberation Sans',sans-serif;">-1.5</span>
<span class="t" style="left:498.84px;top:493.14px;font-size:12px;color:#111;font-family:'DejaVu Sans','Liberation Sans',sans-serif;">-1</span>
<span class="t" style="left:487.39px;top:453.14px;font-size:12px;color:#111;font-family:'DejaVu Sans','Liberation Sans',sans-serif;">-0.5</span>
<span class="t" style="left:503.17px;top:412.14px;font-size:12px;color:#111;font-family:'DejaVu Sans','Liberation Sans',sans-serif;">0</span>
<span class="t" style="left:491.72px;top:371.14px;font-size:12px;color:#111;font-family:'DejaVu Sans','Liberation Sans',sans-serif;">0.5</span>
<span class="t" style="left:503.17px;top:330.14px;font-size:12px;color:#111;font-family:'DejaVu Sans','Liberation Sans',sans-serif;">1</span>
<span class="t" style="left:491.72px;top:289.14px;font-size:12px;color:#111;font-family:'DejaVu Sans','Liberation Sans',sans-serif;">1.5</span>
<span class="t" style="left:503.17px;top:248.14px;font-size:12px;color:#111;font-family:'DejaVu Sans','Liberation Sans',sans-serif;">2</span>
<span class="t" style="left:491.72px;top:207.14px;font-size:12px;color:#111;font-family:'DejaVu Sans','Liberation Sans',sans-serif;">2.5</span>
<span class="t" style="left:503.17px;top:167.14px;font-size:12px;color:#111;font-family:'DejaVu Sans','Liberation Sans',sans-serif;">3</span>
<span class="t" style="left:491.72px;top:126.14px;font-size:12px;color:#111;font-family:'DejaVu Sans','Liberation Sans',sans-serif;">3.5</span>
<span class="t" style="left:503.17px;top:85.14px;font-size:12px;color:#111;font-family:'DejaVu Sans','Liberation Sans',sans-serif;">4</span>
<span class="t" style="left:594px;top:725.68px;font-size:11px;color:#111;font-family:'DejaVu Sans','Liberation Sans',sans-serif;">0</span>
<span class="t" style="left:676px;top:725.68px;font-size:11px;color:#111;font-family:'DejaVu Sans','Liberation Sans',sans-serif;">1</span>
<span class="t" style="left:757px;top:725.68px;font-size:11px;color:#111;font-family:'DejaVu Sans','Liberation Sans',sans-serif;">2</span>
<span class="t" style="left:839px;top:725.68px;font-size:11px;color:#111;font-family:'DejaVu Sans','Liberation Sans',sans-serif;">3</span>
<span class="t" style="left:920px;top:725.68px;font-size:11px;color:#111;font-family:'DejaVu Sans','Liberation Sans',sans-serif;">4</span>
<span class="t" style="left:1002px;top:725.68px;font-size:11px;color:#111;font-family:'DejaVu Sans','Liberation Sans',sans-serif;">5</span>
<span class="t" style="left:1084px;top:725.68px;font-size:11px;color:#111;font-family:'DejaVu Sans','Liberation Sans',sans-serif;">6</span>
<span class="t" style="left:1165px;top:725.68px;font-size:11px;color:#111;font-family:'DejaVu Sans','Liberation Sans',sans-serif;">7</span>
<span class="t" style="left:592px;top:373.04px;font-size:12px;color:#111;font-family:'DejaVu Sans','Liberation Sans',sans-serif;">9</span>
<span class="t" style="left:592px;top:392.24px;font-size:12px;color:#111;font-family:'DejaVu Sans','Liberation Sans',sans-serif;">5</span>
<span class="t" style="left:592px;top:404.84px;font-size:12px;color:#111;font-family:'DejaVu Sans','Liberation Sans',sans-serif;">1</span>
<span class="t" style="left:897.5px;top:362.04px;font-size:12px;color:#111;font-family:'DejaVu Sans','Liberation Sans',sans-serif;">11</span>
<span class="t" style="left:1203.8px;top:386.14px;font-size:12px;color:#111;font-family:'DejaVu Sans','Liberation Sans',sans-serif;">7</span>
<span class="t" style="left:1203.8px;top:398.14px;font-size:12px;color:#1c1cf0;font-family:'DejaVu Sans','Liberation Sans',sans-serif;">3</span>
<span class="t" style="left:1203.8px;top:410.64px;font-size:12px;color:#111;font-family:'DejaVu Sans','Liberation Sans',sans-serif;">2</span>
<span class="t" style="left:592px;top:703.54px;font-size:12px;color:#f00000;font-family:'DejaVu Sans','Liberation Sans',sans-serif;">r=0</span>
<span class="t" style="left:490.5px;top:755.34px;font-size:12px;letter-spacing:-0.431px;">Progress</span>
<span class="t" style="left:563.2px;top:755.34px;font-size:12px;letter-spacing:0.089px;">Log</span>
<span class="t" style="left:611.3px;top:755.34px;font-size:12px;letter-spacing:-0.419px;">Results</span>
<span class="t" style="left:495.3px;top:778.02px;font-size:8px;color:#0a8fb0;font-weight:bold;letter-spacing:-0.323px;">8.85</span>
<span class="t" style="left:494.5px;top:786.02px;font-size:8px;color:#0a8fb0;font-weight:bold;letter-spacing:-0.071px;">e-12</span>
<span class="t" style="left:477px;top:806.24px;font-size:12px;">x</span>
<span class="t" style="left:548.6px;top:806.24px;font-size:12px;">y</span>
<span class="t" style="left:621.2px;top:806.24px;font-size:12px;letter-spacing:-0.050px;">Value</span>
<span class="t" style="left:476.8px;top:827.84px;font-size:12px;letter-spacing:-0.679px;">3.16887</span>
<span class="t" style="left:548.6px;top:827.84px;font-size:12px;letter-spacing:-0.629px;">0.16055</span>
<span class="t" style="left:621px;top:827.84px;font-size:12px;letter-spacing:-0.722px;">20.12568</span>
<span class="t" style="left:476.8px;top:846.84px;font-size:12px;letter-spacing:-0.679px;">3.16792</span>
<span class="t" style="left:548.6px;top:846.84px;font-size:12px;letter-spacing:-0.629px;">0.15433</span>
<span class="t" style="left:621px;top:846.84px;font-size:12px;letter-spacing:-0.722px;">17.83053</span>
<span class="t" style="left:476.8px;top:865.84px;font-size:12px;letter-spacing:-0.679px;">3.16792</span>
<span class="t" style="left:548.6px;top:865.84px;font-size:12px;letter-spacing:-0.721px;">0.1481</span>
<span class="t" style="left:621px;top:865.84px;font-size:12px;letter-spacing:-0.713px;">2.24748</span>
<span class="t" style="left:476.8px;top:884.84px;font-size:12px;letter-spacing:-0.679px;">3.16792</span>
<span class="t" style="left:548.6px;top:884.84px;font-size:12px;letter-spacing:-0.629px;">0.14954</span>
<span class="t" style="left:621px;top:884.84px;font-size:12px;letter-spacing:-0.713px;">2.30838</span>
</div>
</body></html>
